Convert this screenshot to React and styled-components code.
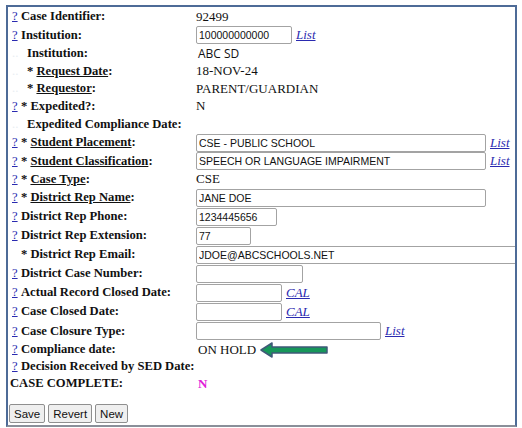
import React from 'react';
import styled, { createGlobalStyle } from 'styled-components';

const Global = createGlobalStyle`
  body {
    margin: 0;
    background: #ffffff;
    font-family: 'Liberation Serif', 'Times New Roman', serif;
    color: #111;
  }
`;

const Frame = styled.div`
  width: 511px;
  height: 422px;
  margin: 5px 0 0 6px;
  border: 2px solid #4d6b97;
  border-bottom-color: #8a8f99;
  padding: 0 0 0 2px;
  box-sizing: border-box;
  overflow: hidden;
`;

const Row = styled.div`
  display: grid;
  grid-template-columns: 186px 1fr;
  align-items: center;
  height: ${p => p.$h}px;
`;

const Label = styled.div`
  font-weight: bold;
  font-size: 12.6px;
  white-space: nowrap;
  display: flex;
  align-items: baseline;
`;

/* help marker: "?" link, faint dots placeholder, or an empty slot */
const Help = styled.a`
  display: inline-block;
  margin-left: 2px;
  width: ${p => (p.$kind === 'dots' ? 13 : 7)}px;
  margin-right: 2px;
  color: ${p => (p.$kind === 'help' ? '#2a2ab0' : '#e9eef2')};
  font-weight: normal;
  text-decoration: ${p => (p.$kind === 'help' ? 'underline' : 'none')};
`;

const U = styled.span`
  text-decoration: underline;
`;

const Value = styled.div`
  display: flex;
  align-items: center;
  gap: 4px;
  font-size: 13px;
  white-space: nowrap;
  padding-left: ${p => p.$pad || 0}px;
`;

const Sans = styled.span`
  font-family: 'Open Sans', 'DejaVu Sans', sans-serif;
  font-weight: 500;
  font-size: 12px;
  padding-left: 2px;
`;

const Field = styled.input`
  box-sizing: border-box;
  width: ${p => p.$w}px;
  height: 18px;
  border: 1px solid #a3a3a3;
  border-radius: 2px;
  padding: 0 2px;
  font-family: 'Liberation Sans', Arial, sans-serif;
  font-size: 10.5px;
  color: #111;
  background: #fff;
  outline: none;
`;

const Link = styled.a`
  font-style: italic;
  color: #2a2ab0;
  text-decoration: underline;
  font-size: 13px;
`;

const Flag = styled.span`
  color: #e020d8;
  font-weight: bold;
`;

const Buttons = styled.div`
  display: flex;
  gap: 3px;
  margin: 12px 0 0 -1px;
`;

const Btn = styled.button`
  font-family: 'Liberation Sans', Arial, sans-serif;
  font-size: 11.5px;
  height: 19px;
  padding: 0 4px;
  background: #efefef;
  border: 1px solid #8f8f8f;
  border-radius: 2px;
  color: #111;
`;

const Arrow = () => (
  <svg width="70" height="16" viewBox="0 0 70 16">
    <path d="M1 8 L12 1 L12 5 L67 5 L67 11 L12 11 L12 15 Z" fill="#17975a" stroke="#3f5a78" strokeWidth="1.5" strokeLinejoin="round" />
  </svg>
);

const rows = [
  { help: 'help', h: 19, label: 'Case Identifier:', value: '92499' },
  { help: 'help', h: 18, label: 'Institution:', field: { w: 96, v: '100000000000' }, link: 'List' },
  { help: 'dots', h: 18, label: 'Institution:', sans: 'ABC SD' },
  { help: 'dots', h: 18, label: ['* ', 'Request Date', ':'], value: '18-NOV-24' },
  { help: 'dots', h: 17, label: ['* ', 'Requestor', ':'], value: 'PARENT/GUARDIAN' },
  { help: 'help', h: 18, label: '* Expedited?:', value: 'N' },
  { help: 'dots', h: 18, label: 'Expedited Compliance Date:', value: '' },
  { help: 'help', h: 19, label: ['* ', 'Student Placement', ':'], field: { w: 290, v: 'CSE - PUBLIC SCHOOL' }, link: 'List' },
  { help: 'help', h: 18, label: ['* ', 'Student Classification', ':'], field: { w: 290, v: 'SPEECH OR LANGUAGE IMPAIRMENT' }, link: 'List' },
  { help: 'help', h: 18, label: ['* ', 'Case Type', ':'], value: 'CSE' },
  { help: 'help', h: 19, label: ['* ', 'District Rep Name', ':'], field: { w: 290, v: 'JANE DOE' } },
  { help: 'help', h: 19, label: 'District Rep Phone:', field: { w: 81, v: '1234445656' } },
  { help: 'help', h: 19, label: 'District Rep Extension:', field: { w: 55, v: '77' } },
  { help: 'blank', h: 19, label: '* District Rep Email:', field: { w: 330, v: 'JDOE@ABCSCHOOLS.NET' } },
  { help: 'help', h: 19, label: 'District Case Number:', field: { w: 107, v: '' } },
  { help: 'help', h: 19, label: 'Actual Record Closed Date:', field: { w: 86, v: '' }, link: 'CAL' },
  { help: 'help', h: 19, label: 'Case Closed Date:', field: { w: 86, v: '' }, link: 'CAL' },
  { help: 'help', h: 20, label: 'Case Closure Type:', field: { w: 185, v: '' }, link: 'List' },
  { help: 'help', h: 17, label: 'Compliance date:', hold: true },
  { help: 'help', h: 17, label: 'Decision Received by SED Date:', value: '' },
  { h: 17, label: 'CASE COMPLETE:', flag: 'N' },
];

const marks = { help: '?', dots: '..', blank: '' };

function renderLabel(label) {
  if (Array.isArray(label)) {
    return <span>{label[0]}<U>{label[1]}</U>{label[2]}</span>;
  }
  return <span>{label}</span>;
}

export default function App() {
  return (
    <>
      <Global />
      <Frame>
        {rows.map((r, i) => (
          <Row key={i} $h={r.h}>
            <Label>
              {r.help && <Help href="#" $kind={r.help}>{marks[r.help]}</Help>}
              {renderLabel(r.label)}
            </Label>
            <Value $pad={r.hold || r.flag ? 2 : 0}>
              {r.value}
              {r.sans && <Sans>{r.sans}</Sans>}
              {r.field && <Field $w={r.field.w} defaultValue={r.field.v} />}
              {r.link && <Link href="#">{r.link}</Link>}
              {r.hold && <><span>ON HOLD</span><Arrow /></>}
              {r.flag && <Flag>{r.flag}</Flag>}
            </Value>
          </Row>
        ))}
        <Buttons>
          <Btn>Save</Btn>
          <Btn>Revert</Btn>
          <Btn>New</Btn>
        </Buttons>
      </Frame>
    </>
  );
}
